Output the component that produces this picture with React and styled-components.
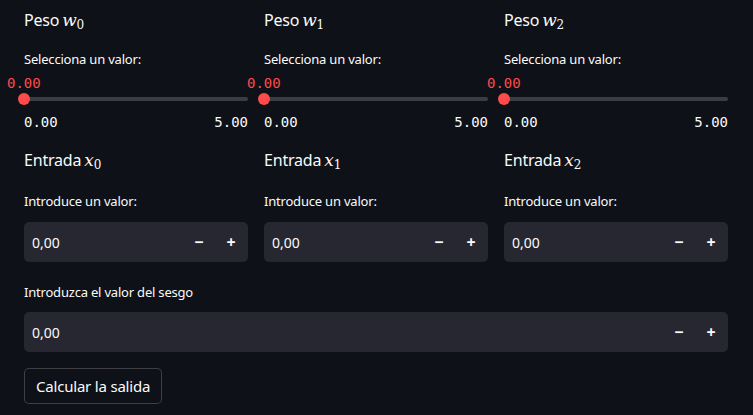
import styled, { createGlobalStyle } from "styled-components";

const Global = createGlobalStyle`
  body {
    margin: 0;
    background: #0e1117;
    color: #fafafa;
    font-family: "Noto Sans", "Open Sans", sans-serif;
  }
`;

const Page = styled.div`
  padding: 10px 25px 0 24px;
  width: 753px;
  height: 415px;
  box-sizing: border-box;
  overflow: hidden;
`;

const Columns = styled.div`
  display: grid;
  grid-template-columns: repeat(3, 224px);
  column-gap: 16px;
`;

const Heading = styled.div`
  font-size: 16px;
  line-height: 20px;
  height: 20px;
  letter-spacing: -0.2px;
  margin-bottom: ${(p) => p.$gap}px;
`;

const Math = styled.span`
  font-family: "DejaVu Serif", "Liberation Serif", serif;
  font-style: italic;
  font-size: 17px;
  margin-left: 3px;
  sub {
    font-style: normal;
    font-size: 12px;
    vertical-align: -3px;
  }
`;

const Label = styled.div`
  font-size: 13px;
  line-height: 18px;
  letter-spacing: -0.2px;
  margin-bottom: ${(p) => p.$gap || 0}px;
`;

const Slider = styled.div`
  position: relative;
  height: 82px;
`;

const Value = styled.div`
  position: absolute;
  left: -17px;
  top: 7px;
  color: #ff4b4b;
  font-family: "DejaVu Sans Mono", "Liberation Mono", monospace;
  font-size: 14px;
`;

const Track = styled.div`
  position: absolute;
  left: 0;
  right: 0;
  top: 29px;
  height: 4px;
  border-radius: 2px;
  background: #3b3d46;
`;

const Thumb = styled.div`
  position: absolute;
  left: -6px;
  top: 25px;
  width: 12px;
  height: 12px;
  border-radius: 50%;
  background: #ff4b4b;
`;

const Ticks = styled.div`
  position: absolute;
  left: 0;
  right: 0;
  top: 46px;
  display: flex;
  justify-content: space-between;
  font-family: "DejaVu Sans Mono", "Liberation Mono", monospace;
  font-size: 14px;
`;

const Field = styled.div`
  display: flex;
  align-items: center;
  height: 40px;
  background: #262730;
  border-radius: 5px;
  margin-bottom: ${(p) => p.$gap || 0}px;
`;

const FieldText = styled.div`
  flex: 1;
  padding-left: 8px;
  font-size: 14px;
`;

const Step = styled.div`
  width: 32px;
  height: 100%;
  display: flex;
  align-items: center;
  justify-content: center;
  font-size: 16px;
  font-weight: 700;
  &:last-child {
    margin-right: 1px;
  }
`;

const Button = styled.button`
  font-family: "Noto Sans", "Open Sans", sans-serif;
  font-size: 15px;
  color: #fafafa;
  background: #0e1117;
  border: 1px solid rgba(250, 250, 250, 0.2);
  border-radius: 5px;
  height: 36px;
  padding: 0 11px;
  letter-spacing: -0.2px;
`;

const Spacer = styled.div`
  height: ${(p) => p.$h}px;
`;

const sub = ["0", "1", "2"];

function NumberField({ gap }) {
  return (
    <Field $gap={gap}>
      <FieldText>0,00</FieldText>
      <Step>−</Step>
      <Step>+</Step>
    </Field>
  );
}

export default function App() {
  return (
    <Page>
      <Global />
      <Columns>
        {sub.map((s) => (
          <div key={"w" + s}>
            <Heading $gap={20}>
              Peso<Math>w<sub>{s}</sub></Math>
            </Heading>
            <Label>Selecciona un valor:</Label>
            <Slider>
              <Value>0.00</Value>
              <Track />
              <Thumb />
              <Ticks>
                <span>0.00</span>
                <span>5.00</span>
              </Ticks>
            </Slider>
          </div>
        ))}
      </Columns>
      <Columns>
        {sub.map((s) => (
          <div key={"x" + s}>
            <Heading $gap={22}>
              Entrada<Math>x<sub>{s}</sub></Math>
            </Heading>
            <Label $gap={12}>Introduce un valor:</Label>
            <NumberField />
          </div>
        ))}
      </Columns>
      <Spacer $h={21} />
      <Label $gap={11}>Introduzca el valor del sesgo</Label>
      <NumberField gap={16} />
      <Button>Calcular la salida</Button>
    </Page>
  );
}
